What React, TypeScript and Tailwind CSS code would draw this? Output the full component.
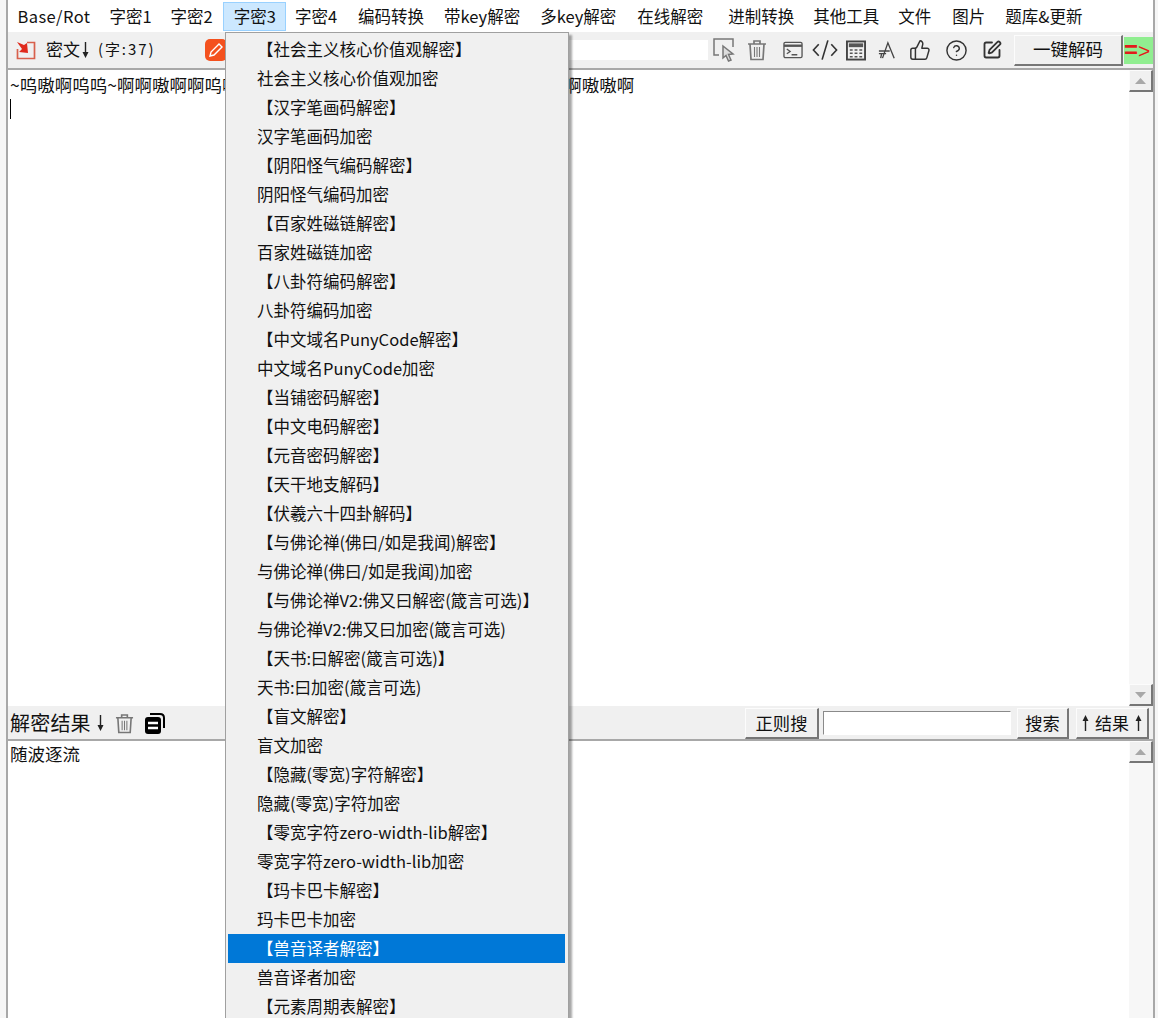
/**
 * CTF decode tool window: menu bar, toolbar, two text panes, open 字密3 dropdown.
 */
import { ThumbsUp, CircleHelp, SquarePen } from "lucide-react";

const menuBar = [
  { label: "Base/Rot", cls: "tracking-[0.4px]" },
  { label: "字密1", cls: "" },
  { label: "字密2", cls: "" },
  { label: "字密3", cls: "ml-[2px] bg-[#cce8ff] outline outline-[#99d1ff]" },
  { label: "字密4", cls: "" },
  { label: "编码转换", cls: "ml-[2px]" },
  { label: "带key解密", cls: "ml-[1px]" },
  { label: "多key解密", cls: "ml-[1px]" },
  { label: "在线解密", cls: "ml-[2px]" },
  { label: "进制转换", cls: "ml-[6px]" },
  { label: "其他工具", cls: "" },
  { label: "文件", cls: "" },
  { label: "图片", cls: "ml-[2px]" },
  { label: "题库&更新", cls: "ml-[1px]" },
];

const dropdown = [
  "【社会主义核心价值观解密】", "社会主义核心价值观加密",
  "【汉字笔画码解密】", "汉字笔画码加密",
  "【阴阳怪气编码解密】", "阴阳怪气编码加密",
  "【百家姓磁链解密】", "百家姓磁链加密",
  "【八卦符编码解密】", "八卦符编码加密",
  "【中文域名PunyCode解密】", "中文域名PunyCode加密",
  "【当铺密码解密】", "【中文电码解密】", "【元音密码解密】", "【天干地支解码】", "【伏羲六十四卦解码】",
  "【与佛论禅(佛曰/如是我闻)解密】", "与佛论禅(佛曰/如是我闻)加密",
  "【与佛论禅V2:佛又曰解密(箴言可选)】", "与佛论禅V2:佛又曰加密(箴言可选)",
  "【天书:曰解密(箴言可选)】", "天书:曰加密(箴言可选)",
  "【盲文解密】", "盲文加密",
  "【隐藏(零宽)字符解密】", "隐藏(零宽)字符加密",
  "【零宽字符zero-width-lib解密】", "零宽字符zero-width-lib加密",
  "【玛卡巴卡解密】", "玛卡巴卡加密",
  "【兽音译者解密】", "兽音译者加密",
  "【元素周期表解密】",
];

const raised = "flex items-center justify-center bg-[#f0f0f0] border border-t-[#fcfcfc] border-l-[#fcfcfc] border-r-2 border-b-2 border-r-[#767676] border-b-[#767676] text-[#111]";

function Arrow({ up = false }: { up?: boolean }) {
  return (
    <svg width="9" height="18" viewBox="0 0 9 18" className={up ? "" : "rotate-180"}>
      <path d="M4.5 1 L7.5 7 H5.2 V17 H3.8 V7 H1.5 Z" fill="#222" />
    </svg>
  );
}

function ScrollButton({ down = false }: { down?: boolean }) {
  return (
    <div className={`${raised} h-[22px] w-[24px] shrink-0`}>
      <svg width="11" height="6" viewBox="0 0 11 6" className={down ? "rotate-180" : ""}>
        <path d="M5.5 0 L11 6 H0 Z" fill="#a8a8a8" />
      </svg>
    </div>
  );
}

function ScrollBar({ full = false }: { full?: boolean }) {
  return (
    <div className="flex w-[24px] shrink-0 flex-col bg-[#f7f7f7]">
      <ScrollButton />
      <div className="flex-1" />
      {full && <ScrollButton down />}
    </div>
  );
}

function BinIcon({ width = 20, height = 22 }: { width?: number; height?: number }) {
  return (
    <svg width={width} height={height} viewBox="0 0 20 22" fill="none" stroke="#777" strokeWidth="1.7">
      <path d="M1 5 H19 M7 5 V2 H13 V5" />
      <path d="M3 5 L4 20.5 H16 L17 5" />
      <path d="M7.5 8 V18 M10 8 V18 M12.5 8 V18" strokeWidth="1.1" />
    </svg>
  );
}

function ToolbarIcons() {
  return (
    <div className="ml-[5px] flex items-center">
      {/* selection + cursor */}
      <svg width="23" height="24" viewBox="0 0 23 24" fill="none" stroke="#777" strokeWidth="1.5">
        <path d="M6 17 H1 V1 H20 V9" />
        <path d="M10 8 L20 16 L15.5 16.5 L18 22 L15.5 23 L13 17.5 L10 20 Z" fill="#ddd" />
      </svg>
      <div className="ml-[11px]"><BinIcon /></div>
      <svg width="20" height="18" viewBox="0 0 21 18" fill="none" stroke="#555" strokeWidth="1.4" className="ml-[16px]">
        <rect x="1" y="1" width="19" height="16" rx="1.5" />
        <path d="M1 4.5 H20" strokeWidth="2.5" />
        <path d="M4 8 L7.5 10.5 L4 13 M9 14 H15" />
      </svg>
      <svg width="26" height="24" viewBox="0 0 27 24" fill="none" stroke="#333" strokeWidth="1.7" className="ml-[9px]">
        <path d="M7 6 L1.5 12 L7 18 M20 6 L25.5 12 L20 18 M16.5 2 L10.5 22" />
      </svg>
      <svg width="20" height="21" viewBox="0 0 21 21" className="ml-[8px]">
        <rect x="1" y="1" width="19" height="19" fill="#f0f0f0" stroke="#444" strokeWidth="2" />
        <rect x="3" y="3" width="15" height="4" fill="#555" />
        <path d="M4 10 H7 M9 10 H12 M14 10 H17 M4 13.5 H7 M9 13.5 H12 M14 13.5 H17 M4 17 H7 M9 17 H12 M14 17 H17" stroke="#555" strokeWidth="1.6" />
      </svg>
      <svg width="18" height="21" viewBox="0 0 20 21" fill="none" stroke="#444" strokeWidth="1.5" className="ml-[12px]">
        <path d="M5 19 L11 2 L18 19 M1 11 H13 M1 14 H9 M4 14 L3 19" />
      </svg>
      <div className="ml-[13px]"><ThumbsUp size={22} color="#333" strokeWidth={1.6} /></div>
      <div className="ml-[14px]"><CircleHelp size={23} color="#333" strokeWidth={1.5} /></div>
      <div className="ml-[14px]"><SquarePen size={20} color="#333" strokeWidth={2.2} /></div>
    </div>
  );
}

export default function App() {
  return (
    <div className="relative h-[1018px] w-[1158px] overflow-hidden bg-[#f6f6f6] pl-[6px] pr-[3px] font-['Noto_Sans_CJK_SC','Noto_Sans',sans-serif] text-[#111]">
      <div className="flex h-full flex-col border-x-[2px] border-[#a8a8a8] bg-[#f0f0f0]">
        {/* menu bar */}
        <div className="flex h-[32px] shrink-0 items-center bg-white text-[16.5px]">
          {menuBar.map((m) => (
            <div key={m.label} className={`flex h-[27px] items-center whitespace-nowrap px-[9.5px] ${m.cls}`}>
              {m.label}
            </div>
          ))}
        </div>

        {/* toolbar */}
        <div className="flex h-[38px] shrink-0 items-center border-b-[2px] border-[#a8a8a8] pl-[8px]">
          <svg width="20" height="20" viewBox="0 0 20 20" fill="none" className="shrink-0">
            <path d="M11 2.5 H18.5 V18.5 H1.5 V9" stroke="#d8604c" strokeWidth="1.7" />
            <path d="M1 2 L8 5 L11 3 L12 13 L3 12 L6 9 Z" fill="#e02a1c" />
          </svg>
          <span className="ml-[10px] w-[34px] shrink-0 pb-[2px] text-[17px]">密文</span>
          <div className="ml-[1px]"><Arrow /></div>
          <span className="ml-[8px] w-[56px] shrink-0 whitespace-nowrap pb-[2px] text-[15px] tracking-[1.9px]">(字:37)</span>
          <div className="ml-[51px] flex h-[22px] w-[22px] shrink-0 items-center justify-center rounded-[5px] bg-[#f4511e]">
            <svg width="16" height="16" viewBox="0 0 16 16" fill="none" stroke="#fff" strokeWidth="1.4">
              <path d="M2 14 L3 10 L11 2 L14 5 L6 13 Z" />
            </svg>
          </div>
          <div className="ml-[5px] h-[20px] w-[476px] shrink-0 bg-white" />
          <ToolbarIcons />
          <button className={`${raised} ml-[12px] h-[31px] w-[109px] shrink-0 text-[17.5px]`}>一键解码</button>
          <div className="ml-[1px] flex h-[27px] flex-1 items-center overflow-hidden bg-[#90ee90] font-['Liberation_Sans',sans-serif] leading-none text-[#e21b1b]">
            <span className="text-[24px] font-bold">=</span>
            <span className="text-[21px]">&gt;</span>
          </div>
        </div>

        {/* cipher pane */}
        <div className="flex h-[636px] shrink-0 bg-white">
          <div className="flex-1 pl-[2px] pt-[3px] text-[17.5px] leading-[23px]">
            <div className="whitespace-nowrap">~呜嗷啊呜呜~啊啊嗷啊啊呜嗷啊呜呜啊啊嗷呜呜啊嗷呜呜呜啊啊~啊嗷啊啊嗷嗷啊</div>
            <div className="mt-[3px] h-[20px] w-px bg-black" />
          </div>
          <ScrollBar full />
        </div>

        {/* result bar */}
        <div className="flex h-[35px] shrink-0 items-center border-b-[2px] border-[#a8a8a8] pl-[2px] pr-[4px] pt-[1px]">
          <span className="text-[20px] tracking-[0.2px]">解密结果</span>
          <div className="ml-[5px]"><Arrow /></div>
          <div className="ml-[10px]"><BinIcon width={19} height={21} /></div>
          <svg width="21" height="21" viewBox="0 0 21 21" className="ml-[10px]">
            <path d="M6 1 H16 Q20 1 20 5 V15" fill="none" stroke="#000" strokeWidth="2" />
            <rect x="1" y="4" width="16" height="17" rx="3" fill="#000" />
            <path d="M4 10 H14 M4 15 H14" stroke="#fff" strokeWidth="2.5" />
          </svg>
          <div className="flex-1" />
          <button className={`${raised} h-[31px] w-[74px] text-[17.3px]`}>正则搜</button>
          <div className="ml-[4px] h-[24px] w-[188px] border border-t-[#8a8a8a] border-l-[#8a8a8a] border-r-white border-b-white bg-white" />
          <button className={`${raised} ml-[6px] h-[31px] w-[52px] text-[17.3px]`}>搜索</button>
          <button className={`${raised} ml-[7px] h-[31px] w-[73px] gap-[5px] text-[17px]`}>
            <Arrow up />结果<Arrow up />
          </button>
        </div>

        {/* result pane */}
        <div className="flex min-h-0 flex-1 bg-white">
          <div className="flex-1 pl-[2px] pt-[1px] text-[17.5px] leading-[23px]">随波逐流</div>
          <ScrollBar />
        </div>
      </div>

      {/* open dropdown, sits over the panes */}
      <div className="absolute left-[225px] top-[32px] w-[344px] border border-[#a0a0a0] bg-[#f0f0f0] pl-[2px] pr-[3px] pt-[2px] text-[16.5px] shadow-[3px_3px_2px_rgba(0,0,0,0.35)]">
        {dropdown.map((d, i) => (
          <div
            key={d}
            className={`flex h-[29px] items-center whitespace-nowrap pl-[29px] ${i === 31 ? "bg-[#0078d7] text-white" : ""}`}
          >
            {d}
          </div>
        ))}
      </div>
    </div>
  );
}
